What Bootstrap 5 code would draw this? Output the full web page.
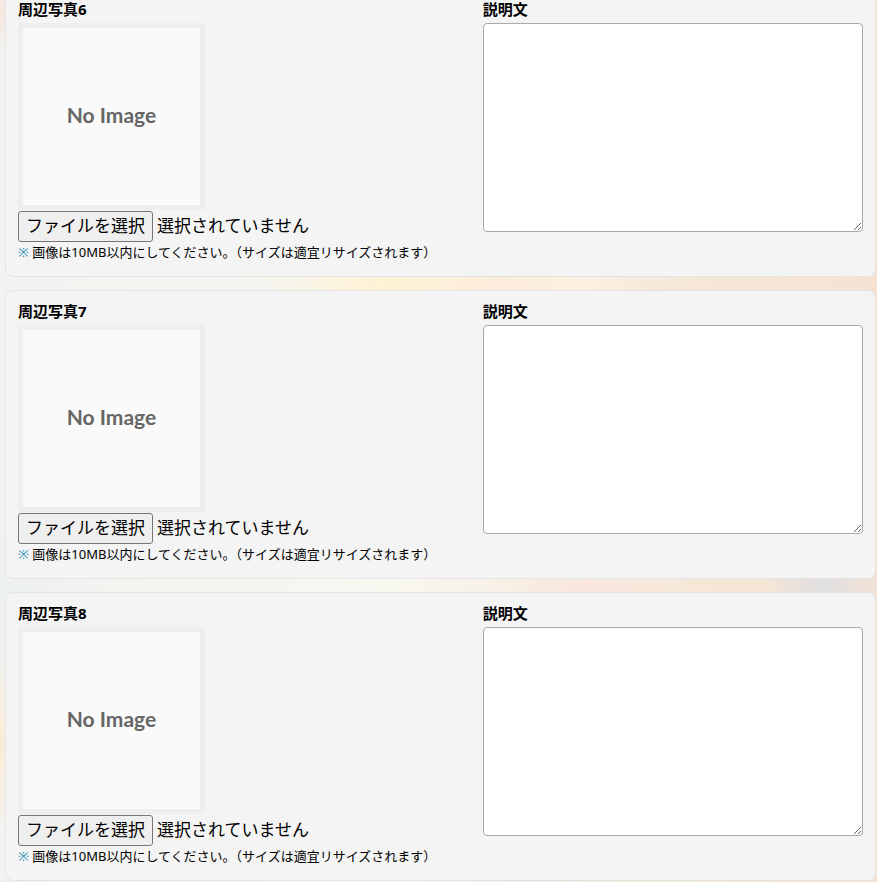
<!DOCTYPE html>
<html lang="ja">
<head>
<meta charset="utf-8">
<meta name="viewport" content="width=device-width, initial-scale=1">
<title>周辺写真</title>
<link rel="stylesheet" href="https://cdn.jsdelivr.net/npm/bootstrap@5.3.0/dist/css/bootstrap.min.css">
<style>
body {
  font-family: "Noto Sans", "Noto Sans CJK JP", sans-serif;
  color: #000;
  background:
    radial-gradient(ellipse 120px 40px at 44% 284px, #fff3d4, transparent),
    radial-gradient(ellipse 160px 50px at 54% 284px, #fdeadb, transparent),
    radial-gradient(ellipse 90px 40px at 64% 284px, #faf4e4, transparent),
    radial-gradient(ellipse 90px 30px at 67% 585px, #fae6dc, transparent),
    radial-gradient(ellipse 60px 30px at 94% 585px, #dfdfe2, transparent),
    radial-gradient(ellipse 30px 90px at 0 745px, #fbebd6, transparent),
    radial-gradient(ellipse 30px 40px at 0 10px, #f6e5de, transparent),
    radial-gradient(ellipse 120px 90px at 0 600px, #edf0f1, transparent),
    linear-gradient(90deg, #f2f3f1, #f8f7f0 45%, #f6e8da 75%, #f5e2d3);
}
.photo-page { margin-top: -12px; padding: 0 1px 0 5px; display: grid; gap: 13px; }
.photo-panel { background: #f4f4f4; border: 1px solid #e4e4e2; border-radius: 8px; padding: 10px 12px 13px; }
.photo-side { flex: 0 0 55%; }
.field-name { font-size: 15px; line-height: 20px; margin-bottom: 4px; }
.no-image { width: 187px; height: 187px; border: 5px solid #eee; background: #fafafa; color: #666; font: 700 21px/24px Lato, sans-serif; padding-bottom: 3px; margin-bottom: 1px; }
.file-name { font-size: 17px; line-height: 29px; }
.file-button { font-size: 17px; line-height: 27px; color: #000; background: #efefef; border: 1px solid #767676; border-radius: 3px; padding: 0 7px 2px; }
.note { font-size: 13px; line-height: 21px; }
.note-sign { color: #2a8bb5; }
.caption-box { height: 209px; border: 1px solid #a9a9a9; border-radius: 4px; background: #fff; padding: 6px; resize: vertical; }
</style>
</head>
<body>
<main class="photo-page">
  <section class="photo-panel d-flex">
    <div class="photo-side">
      <label class="field-name fw-bold d-block" for="photo6">周辺写真6</label>
      <div class="no-image d-flex align-items-center justify-content-center">No Image</div>
      <div class="d-flex">
        <button type="button" class="file-button" onclick="document.getElementById('photo6').click()">ファイルを選択</button>
        <span class="file-name ms-1">選択されていません</span>
        <input type="file" class="visually-hidden" id="photo6" accept="image/*" tabindex="-1">
      </div>
      <div class="note"><span class="note-sign">※</span> 画像は10MB以内にしてください。（サイズは適宜リサイズされます）</div>
    </div>
    <div class="flex-fill">
      <label class="field-name fw-bold d-block" for="caption6">説明文</label>
      <textarea class="caption-box w-100 d-block" id="caption6"></textarea>
    </div>
  </section>
  <section class="photo-panel d-flex">
    <div class="photo-side">
      <label class="field-name fw-bold d-block" for="photo7">周辺写真7</label>
      <div class="no-image d-flex align-items-center justify-content-center">No Image</div>
      <div class="d-flex">
        <button type="button" class="file-button" onclick="document.getElementById('photo7').click()">ファイルを選択</button>
        <span class="file-name ms-1">選択されていません</span>
        <input type="file" class="visually-hidden" id="photo7" accept="image/*" tabindex="-1">
      </div>
      <div class="note"><span class="note-sign">※</span> 画像は10MB以内にしてください。（サイズは適宜リサイズされます）</div>
    </div>
    <div class="flex-fill">
      <label class="field-name fw-bold d-block" for="caption7">説明文</label>
      <textarea class="caption-box w-100 d-block" id="caption7"></textarea>
    </div>
  </section>
  <section class="photo-panel d-flex">
    <div class="photo-side">
      <label class="field-name fw-bold d-block" for="photo8">周辺写真8</label>
      <div class="no-image d-flex align-items-center justify-content-center">No Image</div>
      <div class="d-flex">
        <button type="button" class="file-button" onclick="document.getElementById('photo8').click()">ファイルを選択</button>
        <span class="file-name ms-1">選択されていません</span>
        <input type="file" class="visually-hidden" id="photo8" accept="image/*" tabindex="-1">
      </div>
      <div class="note"><span class="note-sign">※</span> 画像は10MB以内にしてください。（サイズは適宜リサイズされます）</div>
    </div>
    <div class="flex-fill">
      <label class="field-name fw-bold d-block" for="caption8">説明文</label>
      <textarea class="caption-box w-100 d-block" id="caption8"></textarea>
    </div>
  </section>
</main>
<script src="https://cdn.jsdelivr.net/npm/bootstrap@5.3.0/dist/js/bootstrap.bundle.min.js"></script>
</body>
</html>
